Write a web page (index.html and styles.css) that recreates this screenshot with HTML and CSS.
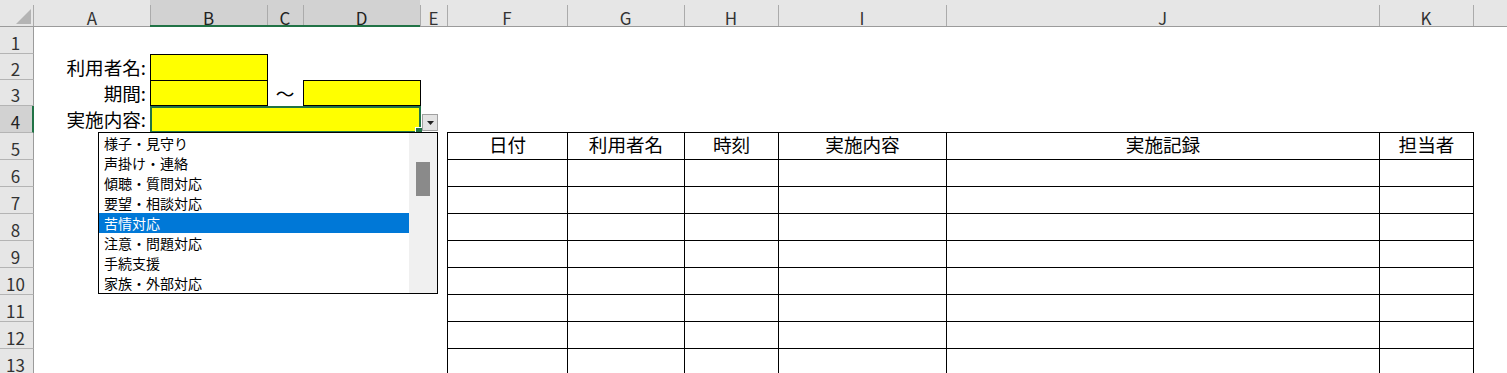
FILE: index.html
```html
<!DOCTYPE html>
<html lang="ja">
<head>
<meta charset="utf-8">
<title>Sheet</title>
<link rel="stylesheet" href="styles.css">
</head>
<body>
<div class="sheet">
  <div class="corner"><svg class="tri-all" width="15" height="15" viewBox="0 0 15 15"><polygon points="15,0 15,15 0,15" fill="#b4b4b4"/></svg></div>
  <div class="ch first">A</div>
  <div class="ch sel">B</div>
  <div class="ch sel">C</div>
  <div class="ch sel">D</div>
  <div class="ch">E</div>
  <div class="ch">F</div>
  <div class="ch">G</div>
  <div class="ch">H</div>
  <div class="ch">I</div>
  <div class="ch">J</div>
  <div class="ch">K</div>
  <div class="ch"></div>

  <div class="rh">1</div><div class="blank s12"></div>

  <div class="rh">2</div>
  <div class="lbl">利用者名:</div>
  <div class="inp first-inp"></div>
  <div class="blank s10"></div>

  <div class="rh">3</div>
  <div class="lbl">期間:</div>
  <div class="inp"></div>
  <div class="tilde">〜</div>
  <div class="inp"></div>
  <div class="blank s8"></div>

  <div class="rh sel">4</div>
  <div class="lbl">実施内容:</div>
  <div class="active s3"></div>
  <div class="blank s8"></div>

  <div class="rh">5</div><div class="blank s5"></div>
  <div class="tc th">日付</div><div class="tc th">利用者名</div><div class="tc th">時刻</div><div class="tc th">実施内容</div><div class="tc th">実施記録</div><div class="tc th last">担当者</div><div class="blank"></div>

  <div class="rh">6</div><div class="blank s5"></div>
  <div class="tc"></div><div class="tc"></div><div class="tc"></div><div class="tc"></div><div class="tc"></div><div class="tc last"></div><div class="blank"></div>

  <div class="rh">7</div><div class="blank s5"></div>
  <div class="tc"></div><div class="tc"></div><div class="tc"></div><div class="tc"></div><div class="tc"></div><div class="tc last"></div><div class="blank"></div>

  <div class="rh">8</div><div class="blank s5"></div>
  <div class="tc"></div><div class="tc"></div><div class="tc"></div><div class="tc"></div><div class="tc"></div><div class="tc last"></div><div class="blank"></div>

  <div class="rh">9</div><div class="blank s5"></div>
  <div class="tc"></div><div class="tc"></div><div class="tc"></div><div class="tc"></div><div class="tc"></div><div class="tc last"></div><div class="blank"></div>

  <div class="rh">10</div><div class="blank s5"></div>
  <div class="tc"></div><div class="tc"></div><div class="tc"></div><div class="tc"></div><div class="tc"></div><div class="tc last"></div><div class="blank"></div>

  <div class="rh">11</div><div class="blank s5"></div>
  <div class="tc"></div><div class="tc"></div><div class="tc"></div><div class="tc"></div><div class="tc"></div><div class="tc last"></div><div class="blank"></div>

  <div class="rh">12</div><div class="blank s5"></div>
  <div class="tc"></div><div class="tc"></div><div class="tc"></div><div class="tc"></div><div class="tc"></div><div class="tc last"></div><div class="blank"></div>

  <div class="rh">13</div><div class="blank s5"></div>
  <div class="tc"></div><div class="tc"></div><div class="tc"></div><div class="tc"></div><div class="tc"></div><div class="tc last"></div><div class="blank"></div>

  <div class="dd-btn"><svg width="7" height="4" viewBox="0 0 7 4"><polygon points="0,0 7,0 3.5,4" fill="#222"/></svg></div>
  <div class="list">
    <ul class="items">
      <li>様子・見守り</li>
      <li>声掛け・連絡</li>
      <li>傾聴・質問対応</li>
      <li>要望・相談対応</li>
      <li class="hl">苦情対応</li>
      <li>注意・問題対応</li>
      <li>手続支援</li>
      <li>家族・外部対応</li>
    </ul>
    <div class="sbar"><div class="thumb"></div></div>
  </div>
</div>
</body>
</html>
```

FILE: styles.css
```css
* { box-sizing: border-box; }
html, body { margin: 0; padding: 0; background: #fff; overflow: hidden; }
body { font-family: "Noto Sans CJK JP", sans-serif; color: #000; }

.sheet {
  position: relative;
  display: grid;
  grid-template-columns: 34px 116px 117px 36px 117px 27px 120px 117px 94px 168px 433px 94px 1fr;
  grid-template-rows: 27px 27px 26px 26px 27px repeat(9, 27px);
  width: 1507px;
  height: 373px;
  overflow: hidden;
}

.corner {
  display: flex;
  justify-content: flex-end;
  align-items: flex-end;
  padding: 0 3px 2px 0;
  background: linear-gradient(#ababab, #ababab) right 0 top 5px / 1px 100% no-repeat, #e6e6e6;
  border-bottom: 1px solid #9b9b9b;
}
.tri-all { display: block; }

.ch {
  display: flex;
  justify-content: center;
  align-items: flex-end;
  background: linear-gradient(#ababab, #ababab) left 0 top 5px / 1px 100% no-repeat, #e6e6e6;
  border-bottom: 1px solid #9b9b9b;
  font-size: 17px;
  line-height: 16px;
  color: #333;
}
.ch.first { background: #e6e6e6; }
.ch.sel {
  background-color: #d2d2d2;
  border-bottom: 2px solid #217346;
  line-height: 14px;
  color: #222;
}

.rh {
  display: flex;
  justify-content: center;
  align-items: flex-end;
  padding-right: 2px;
  background: #e6e6e6;
  border-right: 1px solid #9b9b9b;
  border-bottom: 1px solid #b4b4b4;
  font-size: 17px;
  line-height: 20px;
  color: #333;
}
.rh.sel {
  background: #d2d2d2;
  border-right: 2px solid #217346;
  padding-right: 1px;
  color: #222;
}

.s3 { grid-column: span 3; }
.s5 { grid-column: span 5; }
.s8 { grid-column: span 8; }
.s10 { grid-column: span 10; }
.s12 { grid-column: span 12; }

.lbl {
  font-size: 18.6px;
  line-height: 20px;
  padding-top: 3px;
  padding-right: 4px;
  text-align: right;
  white-space: nowrap;
}

.inp {
  background: #ffff00;
  border: 1px solid #000;
  margin-right: -1px;
}
.inp.first-inp { border-bottom: none; }

.tilde {
  font-size: 18.6px;
  line-height: 20px;
  padding-top: 3px;
  text-align: center;
}

.active {
  position: relative;
  background: #ffff00;
  border: 2px solid #217346;
  margin-right: -1px;
}
.active::after {
  content: "";
  position: absolute;
  right: -4px;
  bottom: -4px;
  width: 6px;
  height: 6px;
  background: #217346;
  border: 1px solid #fff;
}

.tc {
  border-left: 1px solid #000;
  border-top: 1px solid #000;
  margin-top: -1px;
}
.tc.last {
  border-right: 1px solid #000;
  margin-right: -1px;
}
.th {
  font-size: 18.6px;
  line-height: 22px;
  text-align: center;
  white-space: nowrap;
}

.dd-btn {
  position: absolute;
  left: 422px;
  top: 114px;
  width: 16px;
  height: 17px;
  background: #e3e3e3;
  border: 1px solid #a0a0a0;
  display: flex;
  justify-content: center;
  align-items: center;
}
.dd-btn svg { display: block; }

.list {
  position: absolute;
  left: 98px;
  top: 132px;
  width: 340px;
  height: 162px;
  border: 1px solid #000;
  background: #fff;
  display: flex;
  z-index: 2;
}
.items {
  list-style: none;
  margin: 0;
  padding: 0;
  width: 310px;
}
.items li {
  height: 20px;
  line-height: 20px;
  font-size: 14px;
  padding-left: 5px;
  white-space: nowrap;
  color: #000;
}
.items li.hl {
  background: #0078d7;
  color: #fff;
}
.sbar {
  width: 28px;
  background: #f0f0f0;
  padding: 29px 0 0 7px;
}
.thumb {
  width: 14px;
  height: 34px;
  background: #8a8a8a;
}
```
